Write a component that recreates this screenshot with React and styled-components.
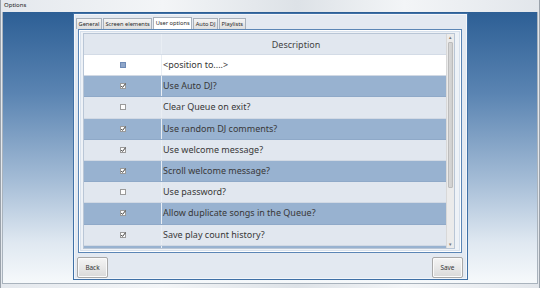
import styled, { createGlobalStyle } from 'styled-components';

const options = [
  { label: '<position to....>', state: 'mixed', tone: 'white' },
  { label: 'Use Auto DJ?', state: 'checked', tone: 'blue' },
  { label: 'Clear Queue on exit?', state: 'empty', tone: 'light' },
  { label: 'Use random DJ comments?', state: 'checked', tone: 'blue' },
  { label: 'Use welcome message?', state: 'checked', tone: 'light' },
  { label: 'Scroll welcome message?', state: 'checked', tone: 'blue' },
  { label: 'Use password?', state: 'empty', tone: 'light' },
  { label: 'Allow duplicate songs in the Queue?', state: 'checked', tone: 'blue' },
  { label: 'Save play count history?', state: 'checked', tone: 'light' },
  { label: '', state: 'none', tone: 'blue' },
];

const tabs = ['General', 'Screen elements', 'User options', 'Auto DJ', 'Playlists'];

export default function App() {
  return (
    <>
      <GlobalStyle />
      <Window>
        <TitleBar>Options</TitleBar>
        <Body>
          <Panel>
            <TabStrip>
              {tabs.map((t) => (
                <Tab key={t} active={t === 'User options'}>
                  {t}
                </Tab>
              ))}
            </TabStrip>
            <TabPage>
              <Grid>
                <Rows>
                  <HeaderRow>
                    <CheckCell />
                    <HeaderText>Description</HeaderText>
                  </HeaderRow>
                  {options.map((o, i) => (
                    <Row key={i} tone={o.tone}>
                      <CheckCell>
                        <CheckBox state={o.state} />
                      </CheckCell>
                      <TextCell>{o.label}</TextCell>
                    </Row>
                  ))}
                </Rows>
                <ScrollBar>
                  <Arrow>▴</Arrow>
                  <Track>
                    <Thumb />
                  </Track>
                  <Arrow>▾</Arrow>
                </ScrollBar>
              </Grid>
            </TabPage>
            <ButtonRow>
              <Button>Back</Button>
              <Button>Save</Button>
            </ButtonRow>
          </Panel>
        </Body>
      </Window>
    </>
  );
}

function CheckBox({ state }) {
  if (state === 'none') return null;
  return (
    <svg width="6" height="6" viewBox="0 0 6 6">
      <rect
        x="0.5"
        y="0.5"
        width="5"
        height="5"
        fill={state === 'mixed' ? '#8fa6c9' : '#fdfdfd'}
        stroke={state === 'mixed' ? '#6f8bb6' : '#9a9a9a'}
        strokeWidth="1"
      />
      {state === 'checked' && (
        <path d="M1.2 3 L2.5 4.4 L5.6 0.6" fill="none" stroke="#3a3a3a" strokeWidth="1" />
      )}
    </svg>
  );
}

// Styled Components
const GlobalStyle = createGlobalStyle`
  html, body {
    margin: 0;
    padding: 0;
    width: 540px;
    height: 288px;
    overflow: hidden;
    background: #d8dde3;
  }
  body {
    font-family: 'Noto Sans', 'Open Sans', sans-serif;
  }
`;

const Window = styled.div`
  width: 540px;
  height: 288px;
  box-sizing: border-box;
  display: flex;
  flex-direction: column;
  background: linear-gradient(90deg, #e4e8ed 0%, #f3f5f7 30%, #dde2e7 55%, #f3f5f7 75%, #e2e6eb 100%);
  border-left: 1px solid #9aa2ab;
  border-right: 1px solid #9aa2ab;
  padding: 0 1px 4px 1px;
`;

const TitleBar = styled.div`
  height: 12px;
  font-size: 6px;
  line-height: 10px;
  color: #1a1a1a;
  padding-left: 2px;
  flex-shrink: 0;
`;

const Body = styled.div`
  flex: 1;
  display: flex;
  padding: 1px 69px 0 70px;
  background: linear-gradient(180deg, #2d5f95 0%, #5a84b2 30%, #a4bcd6 62%, #dfe8f1 85%, #f6f9fb 100%);
  border: 1px solid #a9b3bd;
  border-top: none;
`;

const Panel = styled.div`
  flex: 1;
  display: flex;
  flex-direction: column;
  background: #e3e9f1;
  border: 1px solid #3f70a6;
  box-shadow: inset 0 0 0 1px #f3f6fa;
  margin-bottom: 3px;
`;

const TabStrip = styled.div`
  display: flex;
  align-items: flex-end;
  height: 14px;
  padding: 0 0 0 2px;
  margin-top: 1px;
`;

const Tab = styled.div`
  height: ${({ active }) => (active ? '12px' : '11px')};
  box-sizing: border-box;
  padding: 0 1.5px;
  margin-right: 1px;
  font-size: 5.7px;
  line-height: ${({ active }) => (active ? '11px' : '10px')};
  color: #2a2a2a;
  border: 1px solid #a9b1bb;
  border-bottom: none;
  background: ${({ active }) =>
    active ? '#ffffff' : 'linear-gradient(180deg, #f4f4f4 0%, #dedede 100%)'};
`;

const TabPage = styled.div`
  height: 224px;
  margin: 0 5px 0 4px;
  box-sizing: border-box;
  border: 1px solid #5b86b6;
  box-shadow: inset 0 0 0 1px #ffffff, inset 0 0 0 2px #d6e0ec;
  background: #eef2f7;
  padding: 3px 6px 3px 4px;
  display: flex;
`;

const Grid = styled.div`
  flex: 1;
  display: flex;
  overflow: hidden;
  border: 1px solid #b9c6d6;
`;

const Rows = styled.div`
  flex: 1;
  display: flex;
  flex-direction: column;
  overflow: hidden;
`;

const HeaderRow = styled.div`
  display: flex;
  flex-shrink: 0;
  height: 21px;
  background: #e1e7ef;
  border-bottom: 1px solid #d3dbe6;
  box-sizing: border-box;
`;

const rowColors = { white: '#ffffff', blue: '#98b2d0', light: '#e1e7ef' };

const Row = styled.div`
  display: flex;
  flex-shrink: 0;
  height: 21.2px;
  box-sizing: border-box;
  background: ${({ tone }) => rowColors[tone]};
  border-bottom: 1px solid ${({ tone }) => (tone === 'blue' ? '#8fa9c8' : '#d1d9e4')};
`;

const CheckCell = styled.div`
  width: 77px;
  flex-shrink: 0;
  display: flex;
  align-items: center;
  justify-content: center;
  border-right: 1px solid #e9eef4;
`;

const HeaderText = styled.div`
  flex: 1;
  text-align: center;
  padding-right: 16px;
  font-size: 9px;
  line-height: 21px;
  color: #444;
`;

const TextCell = styled.div`
  flex: 1;
  padding-left: 1px;
  font-size: 9px;
  line-height: 20px;
  color: #383838;
  white-space: nowrap;
`;

const ScrollBar = styled.div`
  width: 7px;
  flex-shrink: 0;
  display: flex;
  flex-direction: column;
  background: #ebebeb;
  border-left: 1px solid #d8d8d8;
`;

const Arrow = styled.div`
  height: 7px;
  font-size: 5px;
  line-height: 7px;
  text-align: center;
  color: #777;
`;

const Track = styled.div`
  flex: 1;
  padding-top: 1px;
`;

const Thumb = styled.div`
  height: 144px;
  margin: 0 1px;
  background: linear-gradient(90deg, #d7d7d7, #cfcfcf);
  border: 1px solid #bcbcbc;
  border-radius: 1px;
`;

const ButtonRow = styled.div`
  flex: 1;
  display: flex;
  justify-content: space-between;
  align-items: flex-start;
  padding: 4px 4px 0 3px;
`;

const Button = styled.div`
  width: 31px;
  height: 21px;
  box-sizing: border-box;
  display: flex;
  align-items: center;
  justify-content: center;
  font-size: 6.4px;
  color: #333;
  border: 1px solid #a9a9a9;
  border-radius: 2px;
  background: linear-gradient(180deg, #f5f5f5 0%, #e8e8e8 50%, #d9d9d9 100%);
  box-shadow: inset 0 0 0 1px #fafafa;
`;
